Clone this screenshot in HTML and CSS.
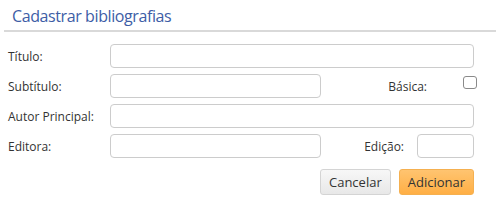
FILE: index.html
```html
<!DOCTYPE html>
<html lang="pt">
<head>
<meta charset="utf-8">
<link rel="stylesheet" href="styles.css">
</head>
<body>
<div class="header"><h1 class="title">Cadastrar bibliografias</h1></div>
<form class="form">
  <div class="row">
    <label class="label">Título:</label>
    <input class="input grow" type="text">
  </div>
  <div class="row">
    <label class="label">Subtítulo:</label>
    <input class="input half" type="text">
    <label class="side-label basica">Básica:</label>
    <span class="check-wrap"><input class="check" type="checkbox"></span>
  </div>
  <div class="row">
    <label class="label">Autor Principal:</label>
    <input class="input grow" type="text">
  </div>
  <div class="row">
    <label class="label">Editora:</label>
    <input class="input half" type="text">
    <label class="side-label edicao">Edição:</label>
    <input class="input small" type="text">
  </div>
  <div class="actions">
    <button type="button" class="btn btn-default">Cancelar</button>
    <button type="button" class="btn btn-primary">Adicionar</button>
  </div>
</form>
</body>
</html>
```
FILE: styles.css
```css
html, body {
  margin: 0;
  padding: 0;
  background: #ffffff;
}
body {
  font-family: "Open Sans", "Noto Sans", sans-serif;
  font-size: 12px;
  color: #333333;
}
.header {
  margin-left: 4px;
  padding: 5px 0 3px 8px;
  border-bottom: 2px solid #d9d9d9;
}
.title {
  margin: 0;
  font-size: 16px;
  letter-spacing: -0.4px;
  font-weight: normal;
  line-height: 22px;
  color: #3d5da6;
}
.form {
  padding: 12px 22px 0 8px;
  display: flex;
  flex-direction: column;
  gap: 6px;
}
.row {
  display: flex;
  align-items: center;
  height: 24px;
}
.label {
  width: 102px;
  flex: none;
}
.input {
  box-sizing: border-box;
  height: 24px;
  border: 1px solid #cccccc;
  border-radius: 4px;
  background: #fff;
  margin: 0;
  padding: 2px 6px;
  font: inherit;
}
.grow { flex: 1; }
.half { width: 211px; flex: none; }
.small { width: 57px; flex: none; }
.side-label {
  flex: 1;
  text-align: right;
}
.basica { padding-right: 1px; }
.check-wrap {
  width: 46px;
  flex: none;
  align-self: flex-start;
  height: 24px;
}
.check {
  appearance: none;
  -webkit-appearance: none;
  display: block;
  box-sizing: border-box;
  width: 14px;
  height: 13px;
  margin: 2px -3px 0 35px;
  border: 1px solid #8a8a8a;
  border-radius: 3px;
  background: #fff;
}
.edicao { padding-right: 13px; }
.actions {
  display: flex;
  justify-content: flex-end;
  gap: 8px;
  margin-top: 5px;
}
.btn {
  height: 26px;
  padding: 0 8px;
  border-radius: 3px;
  font: inherit;
  font-size: 13px;
  color: #333;
}
.btn-default {
  border: 1px solid #d4d4d4;
  background: linear-gradient(#f7f7f7, #e8e8e8);
}
.btn-primary {
  border: 1px solid #f5b050;
  background: linear-gradient(#ffc470, #ffaf45);
}
```
